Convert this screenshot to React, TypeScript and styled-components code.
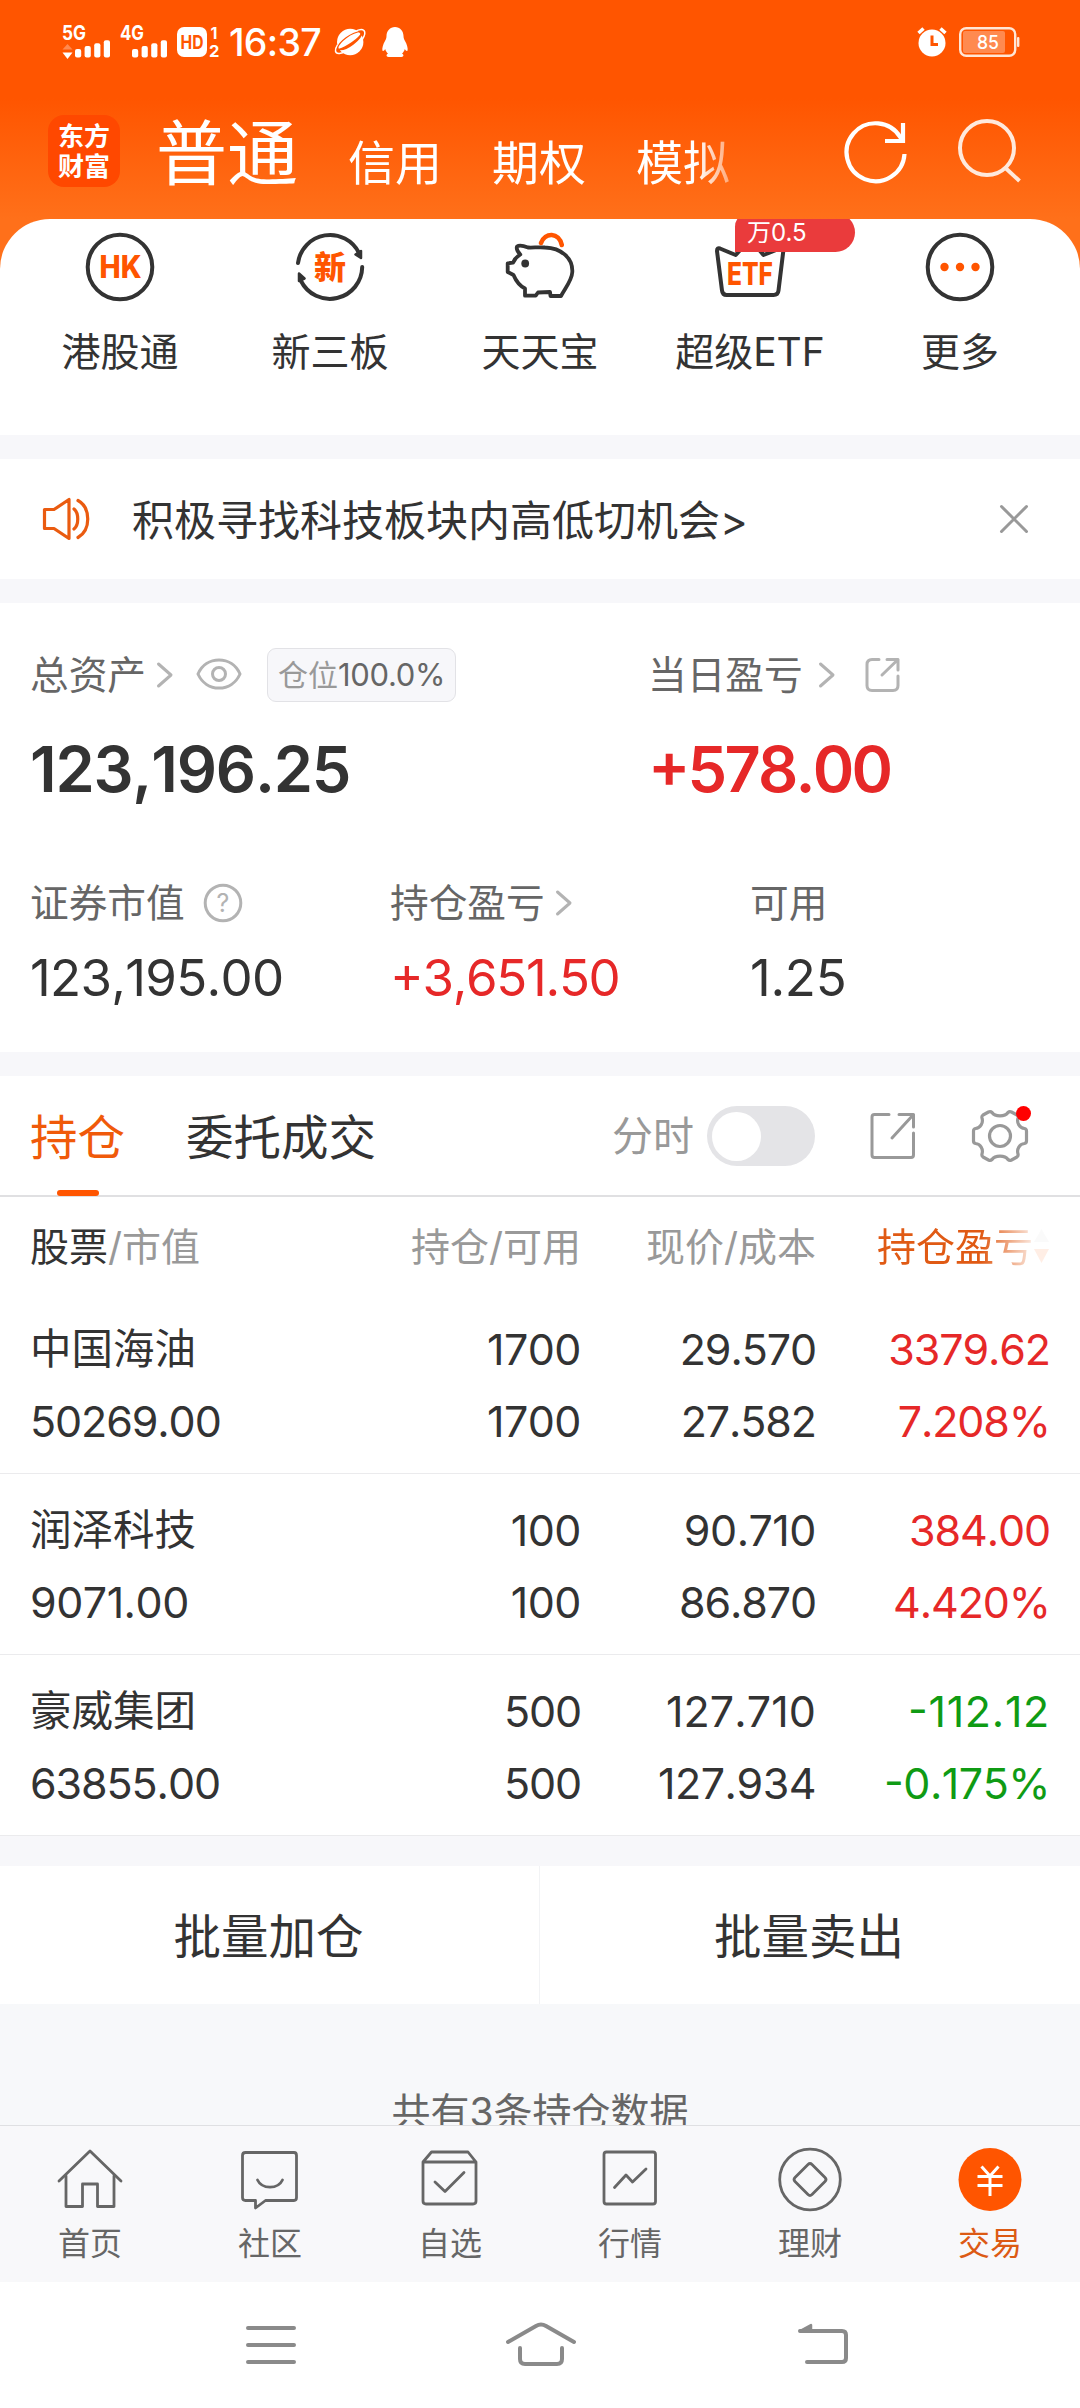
import React from 'react';
import styled, { createGlobalStyle } from 'styled-components';

const FONT = `Inter, "Noto Sans CJK SC", sans-serif`;

const C = {
  ink: '#333333',
  mid: '#666666',
  soft: '#999999',
  faint: '#b3b3b3',
  red: '#e62828',
  green: '#0f9b14',
  orange: '#ff5500',
  gap: '#f7f7fa',
};

const GlobalStyle = createGlobalStyle`
  * { box-sizing: border-box; }
  body { margin: 0; background: #fff; font-family: ${FONT}; color: ${C.ink}; }
  svg { display: block; flex: none; overflow: visible; }
`;

const Screen = styled.div`
  width: 1080px;
  height: 2408px;
  display: flex;
  flex-direction: column;
  overflow: hidden;
  background: linear-gradient(180deg, #ff5500 0, #ff5500 98px, #ff701a 219px, #ff701a 300px);
`;

const Txt = styled.span<{ $size: number; $lh?: number; $color?: string; $weight?: number; $ls?: number }>`
  font-size: ${p => p.$size}px;
  line-height: ${p => p.$lh ?? Math.round(p.$size * 1.3)}px;
  color: ${p => p.$color ?? C.ink};
  font-weight: ${p => p.$weight ?? 400};
  letter-spacing: ${p => p.$ls ?? 0}px;
  white-space: nowrap;
`;

/* ---------- status bar ---------- */

const StatusBar = styled.div`
  height: 84px;
  flex: none;
  display: flex;
  align-items: center;
  padding: 0 60px 0 62px;
`;

const Clock = styled(Txt)`
  width: 94px;
  margin: 0 12px 0 8px;
`;

const StatusRight = styled.div`
  margin-left: auto;
  display: flex;
  align-items: center;
  gap: 11px;
`;

const Signal = ({ label, arrows, shift }: { label: string; arrows?: boolean; shift: number }) => (
  <svg width="50" height="36" viewBox="0 0 50 36" fill="#fff">
    <text x="0" y="16" fontFamily="Inter" fontSize="20" fontWeight="700" textLength="24" lengthAdjust="spacingAndGlyphs">{label}</text>
    {arrows && <path d="M0.5 25.5 L5.5 20 L10.5 25.5 Z" fill="#ff8a50" />}
    {arrows && <path d="M0.5 28.5 L10.5 28.5 L5.5 35 Z" />}
    {[0, 1, 2, 3].map(i => (
      <rect key={i} x={shift + i * 9.6} y={25 - i * 2.9} width="6.2" height={8.4 + i * 2.9} rx="2" />
    ))}
  </svg>
);

const HdBadge = () => (
  <svg width="44" height="34" viewBox="0 0 44 34">
    <rect x="0" y="2" width="30" height="30" rx="7" fill="#fff" />
    <text x="3.5" y="24" fontFamily="Inter" fontSize="19" fontWeight="700" fill={C.orange} textLength="23" lengthAdjust="spacingAndGlyphs">HD</text>
    <text x="33.5" y="13.5" fontFamily="Inter" fontSize="16" fontWeight="700" fill="#fff">1</text>
    <text x="32" y="31.5" fontFamily="Inter" fontSize="16.5" fontWeight="700" fill="#fff">2</text>
  </svg>
);

const PlanetIcon = () => (
  <svg width="31" height="30" viewBox="0 0 31 30">
    <circle cx="15.2" cy="15" r="13.2" fill="#fff" />
    <path d="M2.5 18 C-0.5 22.5 -0.5 27 4.5 26.5 C7 26.2 9 25.2 11 24" fill="none" stroke="#fff" strokeWidth="1.5" />
    <path d="M19.5 5 C23 2.8 27 2 29 3.5 C30.5 5.5 29.5 9 27.5 12" fill="none" stroke="#fff" strokeWidth="1.5" />
    <path d="M4 22.5 C11 20.500 24.500 12 27 5.500 C26.500 12.500 11 24 4 22.500 Z" fill={C.orange} stroke={C.orange} strokeWidth="1.4" strokeLinejoin="round" />
    <path d="M2.500 21 C4 15 16 5 26.500 4.500" fill="none" stroke={C.orange} strokeWidth="1.200" />
  </svg>
);

const PenguinIcon = () => (
  <svg width="26" height="32" viewBox="0 0 26 32" fill="#fff">
    <path d="M13 1 C18 1 21.5 5 21.5 10 C21.5 12 22 13 23 15 C25 18.5 26 22 25.6 24.6 C25 25.4 23.6 24.6 22.8 23 C22.3 25 21.3 26.4 20 27.6 C22 28.6 22 31 19.5 31 L6.5 31 C4 31 4 28.6 6 27.6 C4.7 26.4 3.7 25 3.2 23 C2.4 24.6 1 25.4 0.4 24.6 C0 22 1 18.5 3 15 C4 13 4.5 12 4.5 10 C4.5 5 8 1 13 1 Z" />
  </svg>
);

const AlarmIcon = () => (
  <svg width="31" height="30" viewBox="0 0 31 30">
    <circle cx="15" cy="16" r="13.5" fill="#fff" />
    <path d="M1.5 6 L6.5 1.5 M28.5 6 L23.5 1.5" stroke="#fff" strokeWidth="3.5" />
    <path d="M15 8.5 V17.5 H21" fill="none" stroke={C.orange} strokeWidth="3" />
  </svg>
);

const BatteryIcon = () => (
  <svg width="61" height="30" viewBox="0 0 61 30">
    <rect x="1.2" y="1.2" width="55" height="27.6" rx="6" fill="none" stroke="#ffe6d6" strokeWidth="2.4" />
    <rect x="4" y="4" width="42" height="22" rx="2" fill="#ff8a50" />
    <rect x="58" y="10" width="2.4" height="10" rx="1" fill="#ffe6d6" />
    <text x="18" y="22" fontFamily="Inter" fontSize="19" fontWeight="500" fill="#fff" textLength="22" lengthAdjust="spacingAndGlyphs">85</text>
  </svg>
);

/* ---------- header ---------- */

const Header = styled.header`
  height: 135px;
  flex: none;
  display: flex;
  padding: 31px 56px 0 48px;
`;

const Logo = styled.div`
  width: 72px;
  height: 72px;
  border-radius: 16px;
  background: #ff4800;
  color: #fff;
  font: 700 26px/30px "Noto Sans CJK SC", sans-serif;
  text-align: center;
  padding-top: 5px;
  flex: none;
`;

const AccountTabs = styled.div`
  display: flex;
  align-items: flex-start;
  width: 620px;
  height: 92px;
  margin-left: 36px;
  -webkit-mask-image: linear-gradient(90deg, #000 540px, transparent 600px);
  mask-image: linear-gradient(90deg, #000 540px, transparent 600px);
`;

const AccountTab = styled(Txt)<{ $top: number }>`
  margin: ${p => p.$top}px 50px 0 0;
`;

const HeaderTools = styled.div`
  display: flex;
  gap: 47px;
  margin-left: auto;
  padding-top: 3px;
`;

const RefreshIcon = () => (
  <svg width="66" height="66" viewBox="0 0 66 66" fill="none" stroke="#fff" strokeWidth="4.2">
    <path d="M59.5 36 A29 29 0 1 1 55.5 19.5 L58 24" />
    <path d="M58 5 V23 H40" />
  </svg>
);

const SearchIcon = () => (
  <svg width="66" height="66" viewBox="0 0 66 66" fill="none" stroke="#ffe9dc" strokeWidth="4">
    <circle cx="29" cy="30" r="27" />
    <path d="M47.5 50 L61.5 63" />
  </svg>
);

/* ---------- shortcuts ---------- */

const Shortcuts = styled.section`
  height: 216px;
  flex: none;
  background: #fff;
  border-radius: 50px 50px 0 0;
  display: flex;
  padding: 8px 15px 0;
  overflow: hidden;
`;

const Shortcut = styled.div`
  flex: 1;
  display: flex;
  flex-direction: column;
  align-items: center;
  position: relative;
`;

const ShortcutLabel = styled(Txt)`
  margin-top: 19px;
`;

const Promo = styled.div`
  position: absolute;
  left: 90px;
  top: -14px;
  width: 120px;
  height: 39px;
  padding-left: 12px;
  border-radius: 14px 20px 20px 0;
  background: #ea3b3c;
  display: flex;
  align-items: center;
`;

const HkIcon = () => (
  <svg width="80" height="80" viewBox="0 0 80 80">
    <circle cx="40" cy="40" r="32.3" fill="none" stroke={C.ink} strokeWidth="4" />
    <text x="19.5" y="51" fontFamily="Inter" fontSize="31" fontWeight="800" fill={C.orange} textLength="42" lengthAdjust="spacingAndGlyphs">HK</text>
  </svg>
);

const NewBoardIcon = () => (
  <svg width="80" height="80" viewBox="0 0 80 80">
    <g fill="none" stroke={C.ink} strokeWidth="4" strokeLinecap="round">
      <path d="M8 36 A32.3 32.3 0 0 1 69 26" />
      <path d="M72.2 40 A32.3 32.3 0 0 1 11 54" />
    </g>
    <path d="M65.5 27.5 L71 24 L71 31 Z M9 54 L9 46.5 L14.5 51.5 Z" fill={C.ink} stroke={C.ink} strokeWidth="2.5" strokeLinejoin="round" />
    <text x="40" y="52" textAnchor="middle" fontFamily="Noto Sans CJK SC" fontSize="32" fontWeight="900" fill={C.orange}>新</text>
  </svg>
);

const PiggyIcon = () => (
  <svg width="80" height="80" viewBox="0 0 80 80" fill="none" strokeLinejoin="round" strokeLinecap="round">
    <path
      d="M20.3 27.5 C17 24 16 22 17 19.5 C20 17.5 24 19 28 20.5 C33 21 38 19.8 45 20.5 C61 21 73 31 72.3 45 C72 53 66 60 61 69 L50.5 69 L50 65 L38 65.5 L35.7 68.7 L25 68.7 L25 61.5 C19 58.5 16 54 13.5 48 L7.7 45 L7.7 36.3 L13 35.7 C14.5 32 17 29.5 20.3 27.5 Z"
      stroke={C.ink}
      strokeWidth="3.8"
    />
    <circle cx="25.2" cy="36.5" r="3.9" fill={C.ink} />
    <path d="M41 16 C45 5 59 5 61.8 18" stroke={C.orange} strokeWidth="4.6" />
  </svg>
);

const EtfIcon = () => (
  <svg width="80" height="80" viewBox="0 0 80 80">
    <path
      d="M10 21.5 L25.7 28 L40 12 L53.5 28 L70 21.5 Q73.5 20.5 73.3 24 L68.5 63.5 Q68 68 63.5 68 L16.5 68 Q12.5 68 12 63.5 L7 24 Q7 20.5 10 21.5 Z"
      fill="none"
      stroke={C.ink}
      strokeWidth="4"
      strokeLinejoin="round"
    />
    <text x="17" y="57.5" fontFamily="Inter" fontSize="31" fontWeight="800" fill={C.orange} textLength="46" lengthAdjust="spacingAndGlyphs">ETF</text>
  </svg>
);

const MoreIcon = () => (
  <svg width="80" height="80" viewBox="0 0 80 80">
    <circle cx="40" cy="40" r="32.3" fill="none" stroke={C.ink} strokeWidth="4" />
    <g fill={C.orange}>
      <circle cx="24.5" cy="40" r="4.2" />
      <circle cx="40" cy="40" r="4.2" />
      <circle cx="55.5" cy="40" r="4.2" />
    </g>
  </svg>
);

/* ---------- notice ---------- */

const Gap = styled.div<{ $h: number }>`
  height: ${p => p.$h}px;
  flex: none;
  background: ${C.gap};
`;

const Notice = styled.section`
  height: 120px;
  flex: none;
  background: #fff;
  display: flex;
  align-items: center;
  padding: 0 51px 0 42px;
`;

const NoticeText = styled(Txt)`
  margin: 2px 0 0 41px;
  flex: 1;
`;

const SpeakerIcon = () => (
  <svg width="49" height="46" viewBox="0 0 49 46" fill="none" stroke="#ea5b10" strokeWidth="3.2" strokeLinejoin="round" strokeLinecap="round">
    <path d="M2.5 13.5 H12 L27 3.5 V42.5 L12 32.5 H2.5 Z" />
    <path d="M32 13 C37 17 37 29 32 33" />
    <path d="M36 4.5 C49 12 49 34 36 41.5" />
  </svg>
);

const CloseIcon = () => (
  <svg width="30" height="30" viewBox="0 0 30 30" stroke={C.soft} strokeWidth="3" strokeLinecap="round">
    <path d="M2.5 2.5 L27.5 27.5 M27.5 2.5 L2.5 27.5" />
  </svg>
);

/* ---------- assets ---------- */

const Assets = styled.section`
  height: 449px;
  flex: none;
  background: #fff;
  padding: 42px 30px 0;
`;

const AssetRow = styled.div<{ $cols: string }>`
  display: grid;
  grid-template-columns: ${p => p.$cols};
`;

const AssetLabel = styled.div<{ $h: number }>`
  height: ${p => p.$h}px;
  display: flex;
  align-items: center;
`;

const Slot = styled.span<{ $ml: number }>`
  margin-left: ${p => p.$ml}px;
  display: flex;
`;

const PositionTag = styled.span`
  margin-left: 25px;
  width: 189px;
  height: 54px;
  border: 1.5px solid #e2e2e6;
  border-radius: 9px;
  background: ${C.gap};
  display: flex;
  align-items: center;
  justify-content: center;
`;

const AssetValue = styled(Txt)`
  display: block;
  font-kerning: none;
  font-feature-settings: 'case';
`;

const Chevron = () => (
  <svg width="18" height="28" viewBox="0 0 18 28" fill="none" stroke={C.faint} strokeWidth="3" strokeLinecap="round" strokeLinejoin="round">
    <path d="M2.5 3 L15 14 L2.5 25" />
  </svg>
);

const EyeIcon = () => (
  <svg width="46" height="34" viewBox="0 0 46 34" fill="none" stroke={C.faint} strokeWidth="3">
    <path d="M2 16 C6 7 14 2 23 2 C32 2 40 7 44 16 C40 25 32 30 23 30 C14 30 6 25 2 16 Z" />
    <circle cx="23" cy="16" r="6.5" />
  </svg>
);

const HelpIcon = () => (
  <svg width="40" height="40" viewBox="0 0 40 40">
    <circle cx="20" cy="20" r="17.8" fill="none" stroke={C.faint} strokeWidth="3" />
    <text x="20" y="29" textAnchor="middle" fontFamily="Inter" fontSize="25" fill={C.faint}>?</text>
  </svg>
);

const ShareSmallIcon = () => (
  <svg width="36" height="36" viewBox="0 0 36 36" fill="none" stroke={C.faint} strokeWidth="3" strokeLinecap="round" strokeLinejoin="round">
    <path d="M14 2.5 H7 Q2 2.5 2 7.5 V28.5 Q2 33.5 7 33.5 H28 Q33 33.5 33 28.5 V19" />
    <path d="M22 2.5 H33 V13 M33 2.5 L17 18" />
  </svg>
);

/* ---------- holdings ---------- */

const TabsBar = styled.div`
  height: 121px;
  flex: none;
  background: #fff;
  border-bottom: 2px solid #e0e0e2;
  display: flex;
  padding: 0 50px 0 30px;
`;

const Tab = styled.div<{ $active?: boolean }>`
  height: 120px;
  display: flex;
  flex-direction: column;
  align-items: center;
  margin-right: 61px;
  color: ${p => (p.$active ? '#f05a0a' : C.ink)};
  &::after {
    content: '';
    width: 42px;
    height: 6px;
    margin-top: auto;
    border-radius: 3px;
    background: ${p => (p.$active ? C.orange : 'transparent')};
  }
`;

const TabText = styled.span`
  font-size: 47.5px;
  line-height: 62px;
  margin-top: 31px;
`;

const TabTools = styled.div`
  margin-left: auto;
  height: 120px;
  display: flex;
  align-items: center;
`;

const Toggle = styled.span`
  width: 108px;
  height: 60px;
  margin-left: 13px;
  border-radius: 30px;
  background: #e4e4e7;
  display: flex;
  align-items: center;
  padding-left: 5px;
  &::before {
    content: '';
    width: 49px;
    height: 49px;
    border-radius: 50%;
    background: #fff;
  }
`;

const ShareLargeIcon = () => (
  <svg width="46" height="48" viewBox="0 0 46 48" fill="none" stroke={C.soft} strokeWidth="3" strokeLinejoin="round" strokeLinecap="round">
    <path d="M19 2.5 H4.5 Q2 2.5 2 5 V43 Q2 45.5 4.5 45.5 H41 Q43.5 45.5 43.5 43 V21" />
    <path d="M29 2.5 H43.5 V15 M43.5 2.5 L22 26" />
  </svg>
);

const GearIcon = () => (
  <svg width="58" height="64" viewBox="0 0 58 64" fill="none" stroke={C.soft} strokeWidth="3.2" strokeLinejoin="round">
    <path d="M20 8.5 C23 13 33 13 36 8.5 Q37.5 7 39.5 8 L45 11 Q46.5 12 46 14 C44.5 19 47.5 24 52.5 24.5 Q54.5 25 54.5 27 V37 Q54.5 39 52.5 39.5 C47.5 40 44.5 45 46 50 Q46.5 52 45 53 L39.5 56 Q37.5 57 36 55.5 C33 51 23 51 20 55.5 Q18.5 57 16.5 56 L11 53 Q9.5 52 10 50 C11.5 45 8.5 40 3.5 39.5 Q1.5 39 1.5 37 V27 Q1.5 25 3.5 24.5 C8.5 24 11.5 19 10 14 Q9.5 12 11 11 L16.5 8 Q18.5 7 20 8.5 Z" />
    <circle cx="28" cy="32" r="10.5" />
  </svg>
);

const Gear = styled.span`
  position: relative;
  margin-left: 56px;
  &::after {
    content: '';
    position: absolute;
    right: -1px;
    top: 2px;
    width: 15px;
    height: 15px;
    border-radius: 50%;
    background: #ff0000;
  }
`;

const Table = styled.div`
  flex: none;
  background: #fff;
`;

const columns = `
  display: grid;
  grid-template-columns: 250px 301px 235px 234px;
  padding-left: 30px;
`;

const HeadRow = styled.div`
  ${columns}
  height: 96px;
  align-items: center;
  padding-top: 2px;
`;

const Cell = styled.div<{ $right?: boolean }>`
  display: flex;
  justify-content: ${p => (p.$right ? 'flex-end' : 'flex-start')};
  align-items: center;
`;

const FadingCell = styled(Cell)`
  -webkit-mask-image: linear-gradient(90deg, #000 165px, rgba(0, 0, 0, 0.1) 219px);
  mask-image: linear-gradient(90deg, #000 165px, rgba(0, 0, 0, 0.1) 219px);
`;

const Row = styled.div`
  ${columns}
  height: 181px;
  padding-top: 20px;
  border-bottom: 1.5px solid #ebebed;
`;

const Stack = styled.div<{ $right?: boolean }>`
  display: flex;
  flex-direction: column;
  align-items: ${p => (p.$right ? 'flex-end' : 'flex-start')};
`;

const Figure = styled(Txt)`
  font-kerning: none;
  font-feature-settings: 'case';
`;

const SortIcon = () => (
  <svg width="17" height="36" viewBox="0 0 17 36">
    <path d="M8.5 1 L16 14 H1 Z" fill="#d0d0d0" />
    <path d="M8.5 35 L16 21 H1 Z" fill={C.orange} />
  </svg>
);

/* ---------- bulk actions ---------- */

const Bulk = styled.div`
  height: 138px;
  flex: none;
  background: #fff;
  display: grid;
  grid-template-columns: 539px 1fr;
`;

const BulkButton = styled.div`
  display: flex;
  align-items: center;
  justify-content: center;
  padding: 3px 2px 0 0;
  & + & {
    border-left: 1px solid #f2f3f5;
  }
`;

const Footnote = styled.div`
  height: 121px;
  flex: none;
  background: #f7f8fa;
  overflow: hidden;
  text-align: center;
  padding-top: 82px;
`;

/* ---------- bottom navigation ---------- */

const TabBar = styled.nav`
  height: 157px;
  flex: none;
  background: #f8f8fa;
  border-top: 1.5px solid #dfe0e3;
  display: grid;
  grid-template-columns: repeat(6, 1fr);
`;

const NavItem = styled.div`
  display: flex;
  flex-direction: column;
  align-items: center;
  padding-top: 19px;
`;

const NavLabel = styled(Txt)`
  margin-top: 8px;
`;

const NavSvg = ({ children }: { children: React.ReactNode }) => (
  <svg width="70" height="70" viewBox="0 0 70 70" fill="none" stroke={C.mid} strokeWidth="2.8" strokeLinejoin="round" strokeLinecap="round">
    {children}
  </svg>
);

const navItems = [
  {
    label: '首页',
    icon: (
      <NavSvg>
        <path d="M4 36 L35 6 L66 36" />
        <path d="M11 31 V61.5 H27.5 V39 H42.5 V61.5 H59 V31" />
      </NavSvg>
    ),
  },
  {
    label: '社区',
    icon: (
      <NavSvg>
        <path d="M10.5 7.5 H59 Q61.5 7.5 61.5 10.5 V52.5 Q61.5 55.5 59 55.5 H30.5 L20.5 63 V55.5 H10.5 Q7.5 55.5 7.5 52.5 V10.5 Q7.5 7.5 10.5 7.5 Z" />
        <path d="M22.5 35 C27 44.5 43 44.5 47.5 35" />
      </NavSvg>
    ),
  },
  {
    label: '自选',
    icon: (
      <NavSvg>
        <path d="M8 17 L16.5 7 H53 L61 17 V56 Q61 59 58 59 H11 Q8 59 8 56 Z M8 17 H61" />
        <path d="M20 37 L30 46.5 L49 27.5" />
      </NavSvg>
    ),
  },
  {
    label: '行情',
    icon: (
      <NavSvg>
        <path d="M11.5 7 H58 Q60.5 7 60.5 9.5 V56.5 Q60.5 59 58 59 H11.5 Q9 59 9 56.5 V9.5 Q9 7 11.5 7 Z" />
        <path d="M19.5 42.5 L31 30 L37.5 37 L51 24" />
      </NavSvg>
    ),
  },
  {
    label: '理财',
    icon: (
      <NavSvg>
        <circle cx="35" cy="34.5" r="30.3" />
        <path d="M33 19.5 Q35 17.5 37 19.5 L50 32.5 Q52 34.5 50 36.5 L37 49.5 Q35 51.5 33 49.5 L20 36.5 Q18 34.5 20 32.5 Z" />
      </NavSvg>
    ),
  },
  {
    label: '交易',
    active: true,
    icon: (
      <NavSvg>
        <circle cx="35" cy="34.5" r="31.5" fill={C.orange} stroke="none" />
        <path d="M26.5 21.5 L35 31 L43.5 21.5 M35 31 V51 M22.5 31.5 H47.5 M22.5 40.5 H47.5" stroke="#fff" strokeWidth="3" strokeLinecap="butt" />
      </NavSvg>
    ),
  },
];

const SystemNav = styled.div`
  height: 126px;
  flex: none;
  background: #fff;
  display: flex;
  align-items: center;
  padding-left: 245px;
`;

const SystemSvg = ({ width, children }: { width: number; children: React.ReactNode }) => (
  <svg width={width} height="46" viewBox={`0 0 ${width} 46`} fill="none" stroke="#8a8a8a" strokeWidth="4" strokeLinecap="round" strokeLinejoin="round">
    {children}
  </svg>
);

/* ---------- data ---------- */

const holdings = [
  { name: '中国海油', value: '50269.00', qty: '1700', avail: '1700', price: '29.570', cost: '27.582', pl: '3379.62', pct: '7.208%', color: C.red },
  { name: '润泽科技', value: '9071.00', qty: '100', avail: '100', price: '90.710', cost: '86.870', pl: '384.00', pct: '4.420%', color: C.red },
  { name: '豪威集团', value: '63855.00', qty: '500', avail: '500', price: '127.710', cost: '127.934', pl: '-112.12', pct: '-0.175%', color: C.green },
];

const Num = ({ children, color }: { children: string; color?: string }) => {
  const ones = children.split('1').length - 1;
  return (
    <Figure $size={43} $lh={72} $ls={-1.1 + ones * 0.6} $color={color}>{children}</Figure>
  );
};

export default function App() {
  return (
    <>
      <GlobalStyle />
      <Screen>
        <StatusBar>
          <Signal label="5G" arrows shift={13} />
          <Slot $ml={8}><Signal label="4G" shift={12} /></Slot>
          <Slot $ml={7}><HdBadge /></Slot>
          <Clock $size={37.5} $color="#fff" $weight={500} $ls={-0.7}>16:37</Clock>
          <PlanetIcon />
          <Slot $ml={16}><PenguinIcon /></Slot>
          <StatusRight>
            <AlarmIcon />
            <BatteryIcon />
          </StatusRight>
        </StatusBar>

        <Header>
          <Logo>东方<br />财富</Logo>
          <AccountTabs>
            <AccountTab $top={2} $size={71} $lh={72} $color="#fff">普通</AccountTab>
            <AccountTab $top={18} $size={47} $lh={60} $color="#fff">信用</AccountTab>
            <AccountTab $top={18} $size={47} $lh={60} $color="#fff">期权</AccountTab>
            <AccountTab $top={18} $size={47} $lh={60} $color="#fff">模拟</AccountTab>
          </AccountTabs>
          <HeaderTools>
            <RefreshIcon />
            <SearchIcon />
          </HeaderTools>
        </Header>

        <Shortcuts>
          <Shortcut><HkIcon /><ShortcutLabel $size={39} $lh={52}>港股通</ShortcutLabel></Shortcut>
          <Shortcut><NewBoardIcon /><ShortcutLabel $size={39} $lh={52}>新三板</ShortcutLabel></Shortcut>
          <Shortcut><PiggyIcon /><ShortcutLabel $size={39} $lh={52}>天天宝</ShortcutLabel></Shortcut>
          <Shortcut>
            <EtfIcon />
            <ShortcutLabel $size={39} $lh={52}>超级ETF</ShortcutLabel>
            <Promo><Txt $size={24} $color="#fff">万0.5</Txt></Promo>
          </Shortcut>
          <Shortcut><MoreIcon /><ShortcutLabel $size={39} $lh={52}>更多</ShortcutLabel></Shortcut>
        </Shortcuts>

        <Gap $h={24} />
        <Notice>
          <SpeakerIcon />
          <NoticeText $size={42}>积极寻找科技板块内高低切机会&gt;</NoticeText>
          <CloseIcon />
        </Notice>
        <Gap $h={24} />

        <Assets>
          <AssetRow $cols="618px 1fr">
            <div>
              <AssetLabel $h={60}>
                <Txt $size={38.7} $color={C.mid}>总资产</Txt>
                <Slot $ml={10}><Chevron /></Slot>
                <Slot $ml={22}><EyeIcon /></Slot>
                <PositionTag>
                  <Txt $size={30} $color={C.soft}>仓位</Txt>
                  <Txt $size={31} $color={C.mid} $ls={-0.3}>100.0%</Txt>
                </PositionTag>
              </AssetLabel>
              <AssetValue $size={63} $lh={129} $weight={600} $ls={-1.2}>123,196.25</AssetValue>
            </div>
            <div>
              <AssetLabel $h={60}>
                <Txt $size={38.7} $color={C.mid}>当日盈亏</Txt>
                <Slot $ml={15}><Chevron /></Slot>
                <Slot $ml={29}><ShareSmallIcon /></Slot>
              </AssetLabel>
              <AssetValue $size={63} $lh={129} $weight={600} $ls={-2.8} $color={C.red}>+578.00</AssetValue>
            </div>
          </AssetRow>
          <AssetRow $cols="360px 360px 1fr">
            <AssetLabel $h={138}>
              <Txt $size={38.7} $color={C.mid}>证券市值</Txt>
              <Slot $ml={18}><HelpIcon /></Slot>
            </AssetLabel>
            <AssetLabel $h={138}>
              <Txt $size={38.7} $color={C.mid}>持仓盈亏</Txt>
              <Slot $ml={10}><Chevron /></Slot>
            </AssetLabel>
            <AssetLabel $h={138}><Txt $size={38.7} $color={C.mid}>可用</Txt></AssetLabel>
            <AssetValue $size={51} $lh={12} $ls={-0.7}>123,195.00</AssetValue>
            <AssetValue $size={51} $lh={12} $ls={-1.3} $color={C.red}>+3,651.50</AssetValue>
            <AssetValue $size={51} $lh={12} $ls={-0.3}>1.25</AssetValue>
          </AssetRow>
        </Assets>
        <Gap $h={24} />

        <TabsBar>
          <Tab $active><TabText>持仓</TabText></Tab>
          <Tab><TabText>委托成交</TabText></Tab>
          <TabTools>
            <Txt $size={41} $color={C.soft}>分时</Txt>
            <Toggle />
            <Slot $ml={55}><ShareLargeIcon /></Slot>
            <Gear><GearIcon /></Gear>
          </TabTools>
        </TabsBar>

        <Table>
          <HeadRow>
            <Cell>
              <Txt $size={39}>股票</Txt>
              <Txt $size={39} $color={C.soft}>/市值</Txt>
            </Cell>
            <Cell $right><Txt $size={39} $color={C.soft}>持仓/可用</Txt></Cell>
            <Cell $right><Txt $size={39} $color={C.soft}>现价/成本</Txt></Cell>
            <FadingCell $right>
              <Txt $size={39} $color="#e05a14">持仓盈亏</Txt>
              <SortIcon />
            </FadingCell>
          </HeadRow>
          {holdings.map(h => (
            <Row key={h.name}>
              <Stack>
                <Txt $size={41.5} $lh={72}>{h.name}</Txt>
                <Num>{h.value}</Num>
              </Stack>
              <Stack $right><Num>{h.qty}</Num><Num>{h.avail}</Num></Stack>
              <Stack $right><Num>{h.price}</Num><Num>{h.cost}</Num></Stack>
              <Stack $right><Num color={h.color}>{h.pl}</Num><Num color={h.color}>{h.pct}</Num></Stack>
            </Row>
          ))}
        </Table>

        <Gap $h={30} />
        <Bulk>
          <BulkButton><Txt $size={47.5}>批量加仓</Txt></BulkButton>
          <BulkButton><Txt $size={47.5}>批量卖出</Txt></BulkButton>
        </Bulk>
        <Footnote><Txt $size={39} $lh={52} $color={C.mid}>共有3条持仓数据</Txt></Footnote>

        <TabBar>
          {navItems.map(n => (
            <NavItem key={n.label}>
              {n.icon}
              <NavLabel $size={32} $lh={42} $color={n.active ? '#dc5a14' : C.mid}>{n.label}</NavLabel>
            </NavItem>
          ))}
        </TabBar>

        <SystemNav>
          <SystemSvg width={52}>
            <path d="M3 6 H49 M3 23 H49 M3 40 H49" />
          </SystemSvg>
          <Slot $ml={207}>
            <SystemSvg width={74}>
              <path d="M4 20 L32 4 Q37 1 42 4 L70 20" />
              <path d="M16 26 V37 Q16 42 21 42 H53 Q58 42 58 37 V26" />
            </SystemSvg>
          </Slot>
          <Slot $ml={218}>
            <SystemSvg width={54}>
              <path d="M4 9 H46 Q50 9 50 13 V36 Q50 40 46 40 H11" />
              <path d="M4 9 L15 3 V9 Z" fill="#8a8a8a" strokeWidth="2.5" />
            </SystemSvg>
          </Slot>
        </SystemNav>
      </Screen>
    </>
  );
}
